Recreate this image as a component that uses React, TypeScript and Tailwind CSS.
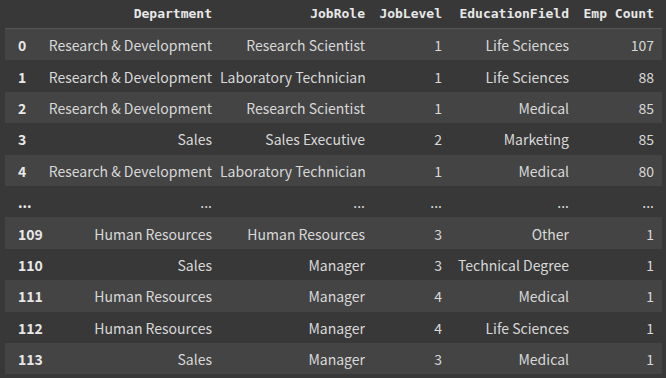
import React from "react";

const rows: (string)[][] = [
  ["0", "Research & Development", "Research Scientist", "1", "Life Sciences", "107"],
  ["1", "Research & Development", "Laboratory Technician", "1", "Life Sciences", "88"],
  ["2", "Research & Development", "Research Scientist", "1", "Medical", "85"],
  ["3", "Sales", "Sales Executive", "2", "Marketing", "85"],
  ["4", "Research & Development", "Laboratory Technician", "1", "Medical", "80"],
  ["...", "...", "...", "...", "...", "..."],
  ["109", "Human Resources", "Human Resources", "3", "Other", "1"],
  ["110", "Sales", "Manager", "3", "Technical Degree", "1"],
  ["111", "Human Resources", "Manager", "4", "Medical", "1"],
  ["112", "Human Resources", "Manager", "4", "Life Sciences", "1"],
  ["113", "Sales", "Manager", "3", "Medical", "1"],
];

const headers = ["", "Department", "JobRole", "JobLevel", "EducationField", "Emp Count"];
const cols = "grid grid-cols-[37px_178px_153px_77px_127px_85px]";

export default function App() {
  return (
    <div className="w-[666px] h-[378px] bg-[#383838] overflow-hidden pl-[5px]">
      <div className="w-[657px]">
        <div
          className={`${cols} h-[29px] items-center border-b border-[#555555] text-[13px] font-bold text-[#e8e8e8]`}
          style={{ fontFamily: '"DejaVu Sans Mono", monospace' }}
        >
          {headers.map((h, i) => (
            <div key={i} className="text-right pr-[8px] whitespace-nowrap">
              {h}
            </div>
          ))}
        </div>
        {rows.map((r, ri) => (
          <div
            key={ri}
            className={`${cols} h-[31.4px] items-center pt-[2px] text-[14px] text-[#d8d8d8] ${ri % 2 === 0 ? "bg-[#444444]" : "bg-[#383838]"}`}
            style={{ fontFamily: '"Noto Sans CJK KR", "Noto Sans", sans-serif' }}
          >
            {r.map((c, ci) =>
              ci === 0 ? (
                <div key={ci} className="pl-[13px] font-bold text-[#e8e8e8] whitespace-nowrap">
                  {c}
                </div>
              ) : (
                <div key={ci} className="text-right pr-[8px] whitespace-nowrap">
                  {c}
                </div>
              )
            )}
          </div>
        ))}
      </div>
    </div>
  );
}
